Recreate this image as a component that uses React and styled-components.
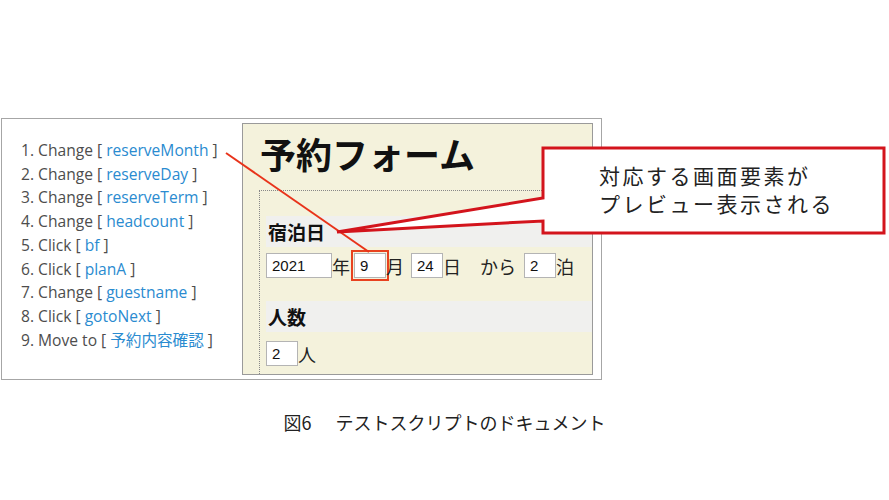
import React from 'react';
import styled, { createGlobalStyle } from 'styled-components';

const GlobalStyle = createGlobalStyle`
  body {
    margin: 0;
    background: #ffffff;
  }
`;

const Page = styled.div`
  position: relative;
  width: 889px;
  height: 500px;
  overflow: hidden;
  font-family: "Noto Sans CJK JP", sans-serif;
`;

const Frame = styled.div`
  display: flex;
  box-sizing: border-box;
  width: 601px;
  height: 262px;
  margin: 118px 0 0 1px;
  padding: 4px 8px 4px 0;
  border: 1px solid #a6a6a6;
`;

const StepList = styled.ul`
  list-style: none;
  width: 240px;
  margin: 0;
  padding: 16px 0 0 19px;
  box-sizing: border-box;
  font-family: "Open Sans", "Noto Sans CJK JP", sans-serif;
  font-size: 15.6px;
  line-height: 23.7px;
  color: #4d4d4d;
`;

const Step = styled.li`
  white-space: nowrap;
`;

const Target = styled.span`
  color: #2a8bd0;
`;

const Panel = styled.div`
  flex: 1;
  background: #f4f2dc;
  border: 1px solid #9a9a9a;
  overflow: hidden;
`;

const Title = styled.h1`
  margin: 0;
  padding: 5px 0 0 17px;
  font-family: "Noto Sans CJK JP", sans-serif;
  font-size: 36px;
  font-weight: 700;
  line-height: 48px;
  color: #111;
`;

const FormBox = styled.div`
  margin: 13px 0 0 16px;
  padding: 25px 0 0 6px;
  border-top: 1px dotted #888;
  border-left: 1px dotted #888;
  height: 200px;
`;

const SectionHead = styled.div`
  height: 31px;
  padding-left: 2px;
  background: #f0f0ee;
  font-size: 19px;
  font-weight: 700;
  line-height: 31px;
  color: #111;
`;

const FieldRow = styled.div`
  display: flex;
  align-items: center;
  height: 25px;
  padding: ${(p) => p.$pt}px 0 ${(p) => p.$pb}px;
  font-size: 18px;
  color: #222;
`;

const Input = styled.span`
  display: inline-flex;
  align-items: center;
  box-sizing: border-box;
  width: ${(p) => p.$w}px;
  height: 25px;
  margin-left: ${(p) => p.$ml || 0}px;
  padding-left: 5px;
  background: #fff;
  border: 1px solid #b4b4b4;
  font-family: "Liberation Sans", Arial, sans-serif;
  font-size: 15px;
  color: #111;
  ${(p) => p.$hl && 'outline: 2px solid #e8421f; outline-offset: 1px;'}
`;

const Unit = styled.span`
  margin-left: ${(p) => p.$ml || 0}px;
  line-height: 1;
`;

const Overlay = styled.svg`
  position: absolute;
  left: 0;
  top: 0;
  pointer-events: none;
`;

const CalloutText = styled.div`
  position: absolute;
  left: 599px;
  top: 161px;
  font-size: 21px;
  line-height: 28px;
  letter-spacing: 2.5px;
  color: #222;
  font-weight: 400;
`;

const Caption = styled.div`
  position: absolute;
  left: 0;
  right: 0;
  top: 410px;
  display: flex;
  justify-content: center;
  gap: 24px;
  font-size: 18px;
  line-height: 24px;
  color: #222;
`;

const steps = [
  ['Change', 'reserveMonth'],
  ['Change', 'reserveDay'],
  ['Change', 'reserveTerm'],
  ['Change', 'headcount'],
  ['Click', 'bf'],
  ['Click', 'planA'],
  ['Change', 'guestname'],
  ['Click', 'gotoNext'],
  ['Move to', '予約内容確認'],
];

export default function App() {
  return (
    <Page>
      <GlobalStyle />
      <Frame>
        <StepList>
          {steps.map(([verb, target], i) => (
            <Step key={i}>
              {i + 1}. {verb} [ <Target>{target}</Target> ]
            </Step>
          ))}
        </StepList>
        <Panel>
          <Title>予約フォーム</Title>
          <FormBox>
            <SectionHead>宿泊日</SectionHead>
            <FieldRow $pt={6} $pb={23}>
              <Input $w={66}>2021</Input>
              <Unit>年</Unit>
              <Input $w={32} $ml={4} $hl>9</Input>
              <Unit>月</Unit>
              <Input $w={32} $ml={7}>24</Input>
              <Unit>日</Unit>
              <Unit $ml={19}>から</Unit>
              <Input $w={32} $ml={8}>2</Input>
              <Unit>泊</Unit>
            </FieldRow>
            <SectionHead>人数</SectionHead>
            <FieldRow $pt={9} $pb={10}>
              <Input $w={32}>2</Input>
              <Unit>人</Unit>
            </FieldRow>
          </FormBox>
        </Panel>
      </Frame>

      <Overlay width="889" height="500" viewBox="0 0 889 500">
        <line x1="226" y1="153" x2="369" y2="252" stroke="#e8331a" strokeWidth="2" />
        <path
          d="M543 148 L884 148 L884 233 L543 233 L543 221 L337 232 L543 198 Z"
          fill="#fff"
          stroke="#d3141c"
          strokeWidth="3"
          strokeLinejoin="miter"
        />
      </Overlay>
      <CalloutText>
        対応する画面要素が
        <br />
        プレビュー表示される
      </CalloutText>
      <Caption>
        <span>図6</span>
        <span>テストスクリプトのドキュメント</span>
      </Caption>
    </Page>
  );
}
